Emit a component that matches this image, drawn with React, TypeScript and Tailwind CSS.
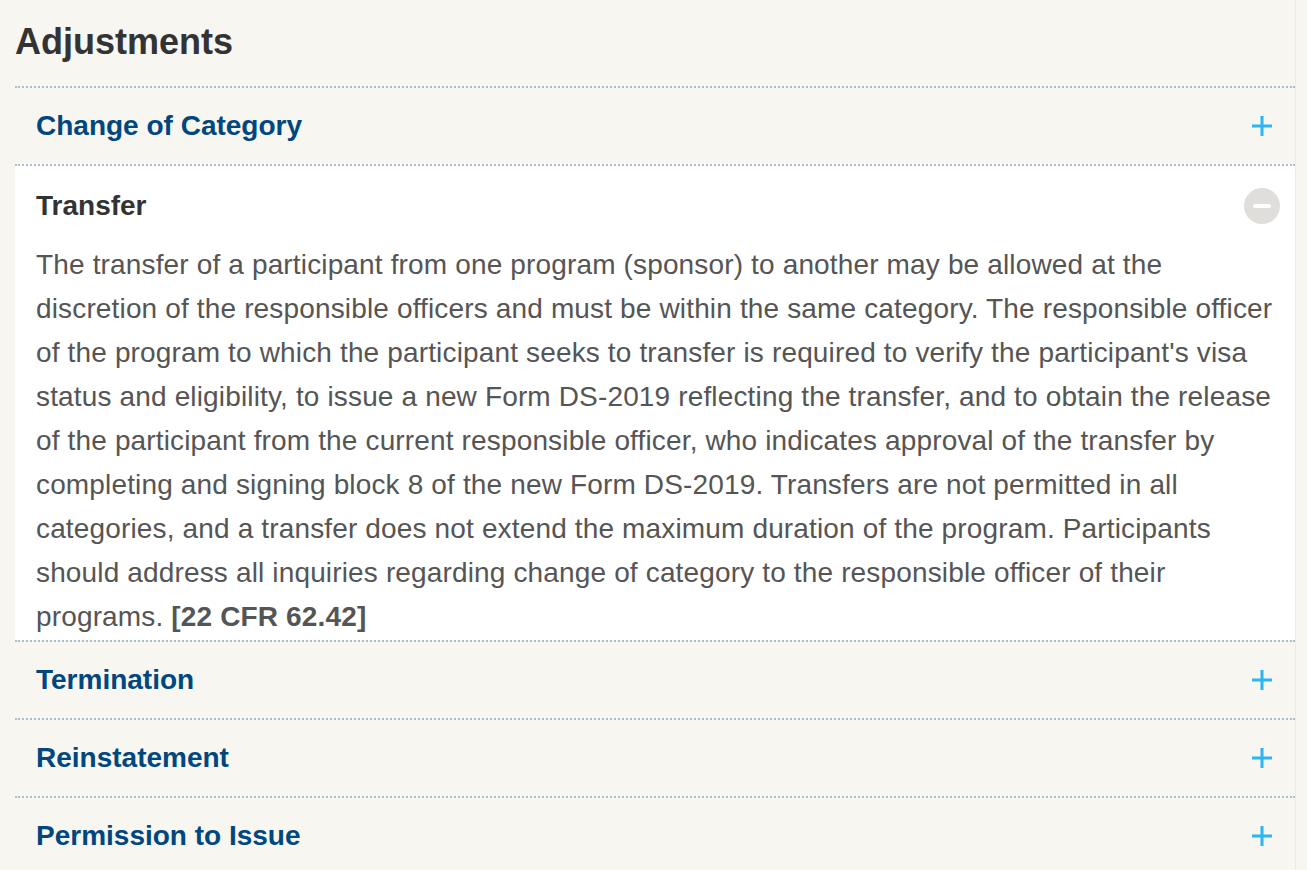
import { useState } from "react";

const sections = [
  { key: "category", title: "Change of Category" },
  { key: "transfer", title: "Transfer" },
  { key: "termination", title: "Termination" },
  { key: "reinstatement", title: "Reinstatement" },
  { key: "permission", title: "Permission to Issue" },
];

const transferLines = [
  "The transfer of a participant from one program (sponsor) to another may be allowed at the",
  "discretion of the responsible officers and must be within the same category. The responsible officer",
  "of the program to which the participant seeks to transfer is required to verify the participant's visa",
  "status and eligibility, to issue a new Form DS-2019 reflecting the transfer, and to obtain the release",
  "of the participant from the current responsible officer, who indicates approval of the transfer by",
  "completing and signing block 8 of the new Form DS-2019. Transfers are not permitted in all",
  "categories, and a transfer does not extend the maximum duration of the program. Participants",
  "should address all inquiries regarding change of category to the responsible officer of their",
];

function PlusIcon() {
  return (
    <svg width="22" height="22" viewBox="0 0 22 22" aria-hidden="true">
      <path d="M11 1v20M1 11h20" stroke="#2bb5f4" strokeWidth="3" />
    </svg>
  );
}

function MinusIcon() {
  return (
    <span className="flex h-9 w-9 items-center justify-center rounded-full bg-[#dfdedb]">
      <span className="block h-1 w-[18px] rounded-sm bg-white" />
    </span>
  );
}

function TransferBody() {
  return (
    <p className="-mt-[3px] pb-[1px] text-[28px] leading-[44px] tracking-[0.15px] text-[#555]">
      {transferLines.map((line) => (
        <span key={line} className="block whitespace-nowrap">
          {line}
        </span>
      ))}
      <span className="block whitespace-nowrap">
        programs. <strong className="font-bold">[22 CFR 62.42]</strong>
      </span>
    </p>
  );
}

export default function App() {
  const [open, setOpen] = useState("transfer");

  return (
    <div
      className="min-h-screen bg-[#f7f6f1]"
      style={{ fontFamily: '"Liberation Sans", Arial, sans-serif' }}
    >
      <div className="w-[1296px] border-r border-[#ecebe6] pl-[15px] pt-[21px]">
        <h1 className="mb-[23px] text-[36px] font-bold leading-[42px] text-[#333]">
          Adjustments
        </h1>
        <div className="w-[1280px]">
          {sections.map((s) => {
            const isOpen = open === s.key;
            return (
              <div
                key={s.key}
                className={
                  "border-t-2 border-dotted border-[#a9bfcc] px-[21px] " +
                  (isOpen ? "bg-white" : "")
                }
              >
                <button
                  onClick={() => setOpen(isOpen ? "" : s.key)}
                  className="flex w-full items-center justify-between py-[22px] text-left"
                >
                  <span
                    className={
                      "text-[28px] font-bold leading-[32px] " +
                      (isOpen ? "text-[#333]" : "text-[#00467f]")
                    }
                  >
                    {s.title}
                  </span>
                  <span className="-mr-[6px] flex w-9 justify-center">
                    {isOpen ? <MinusIcon /> : <PlusIcon />}
                  </span>
                </button>
                {isOpen && s.key === "transfer" && <TransferBody />}
              </div>
            );
          })}
        </div>
      </div>
    </div>
  );
}
